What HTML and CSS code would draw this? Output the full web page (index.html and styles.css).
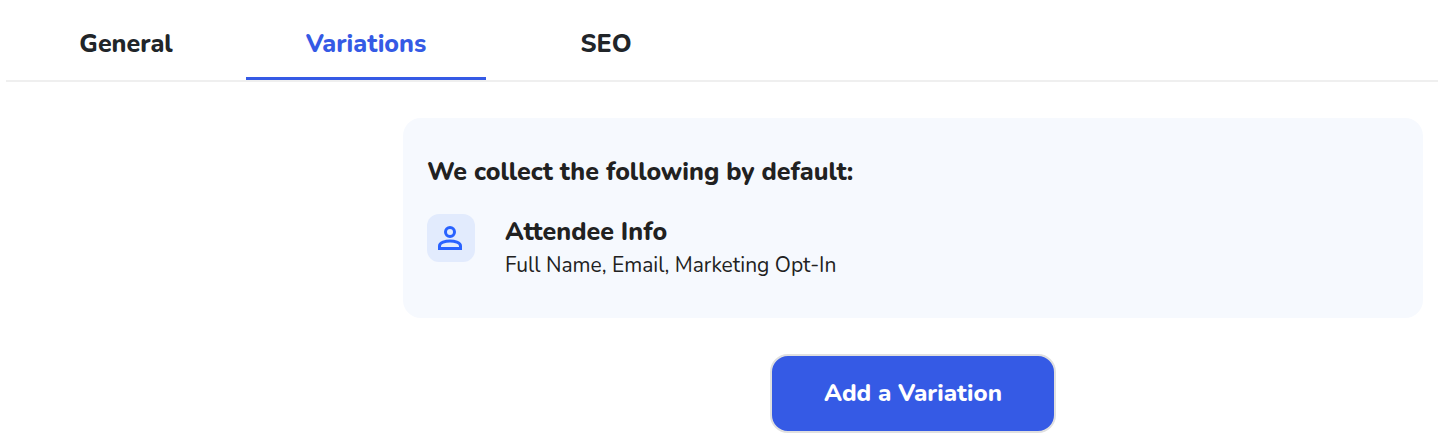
FILE: index.html
```html
<!DOCTYPE html>
<html lang="en">
<head>
<meta charset="utf-8">
<title>Variations</title>
<link rel="stylesheet" href="styles.css">
</head>
<body>
<nav class="tabs" role="tablist">
<button class="tab" role="tab" aria-selected="false">General</button>
<button class="tab tab-active" role="tab" aria-selected="true">Variations</button>
<button class="tab" role="tab" aria-selected="false">SEO</button>
</nav>
<main class="content">
<section class="card">
<h2 class="card-title">We collect the following by default:</h2>
<div class="item">
<span class="item-icon">
<svg width="48" height="48" viewBox="0 0 48 48" fill="none" stroke="currentColor" stroke-width="3" aria-hidden="true"><circle cx="23" cy="18" r="4.5"/><path d="M12.500 34.500V32c0-3.500 6-5 10.500-5s10.500 1.500 10.500 5v2.500z"/></svg>
</span>
<div class="item-text">
<h3 class="item-title">Attendee Info</h3>
<p class="item-detail">Full Name, Email, Marketing Opt-In</p>
</div>
</div>
</section>
<button class="add-button">Add a Variation</button>
</main>
</body>
</html>
```
FILE: styles.css
```css
* {
  box-sizing: border-box;
}

body {
  margin: 0;
  background: #fff;
  color: #212121;
  font-family: Nunito, "Open Sans", sans-serif;
}

button {
  font-family: inherit;
  cursor: pointer;
}

.tabs {
  display: flex;
  margin-left: 6px;
  border-bottom: 2px solid #efefef;
}

.tab {
  width: 240px;
  padding: 26px 0 15px;
  border: 0;
  border-bottom: 3px solid transparent;
  background: none;
  color: #212529;
  font-size: 25px;
  line-height: 36px;
  font-weight: 800;
}

.tab-active {
  border-bottom-color: #355ae5;
  color: #355ae5;
}

.content {
  display: flex;
  flex-direction: column;
  align-items: center;
  gap: 36px;
  padding: 36px 15px 15px 403px;
}

.card {
  width: 100%;
  padding: 36px 24px 38px;
  border-radius: 18px;
  background: #f6f9fe;
}

.card-title,
.item-title {
  margin: 0;
  font-size: 25px;
  line-height: 36px;
  font-weight: 800;
}

.item {
  display: flex;
  gap: 30px;
  margin-top: 24px;
}

.item-icon {
  width: 48px;
  height: 48px;
  border-radius: 12px;
  background: #e2ebfd;
  color: #2962ff;
}

.item-detail {
  margin: 0;
  font-size: 21px;
  line-height: 30px;
}

.add-button {
  min-width: 286px;
  padding: 20px 24px;
  border: 2px solid #e0e0e0;
  border-radius: 18px;
  background: #355ae5;
  color: #fff;
  font-size: 24px;
  line-height: 35px;
  font-weight: 800;
}
```
